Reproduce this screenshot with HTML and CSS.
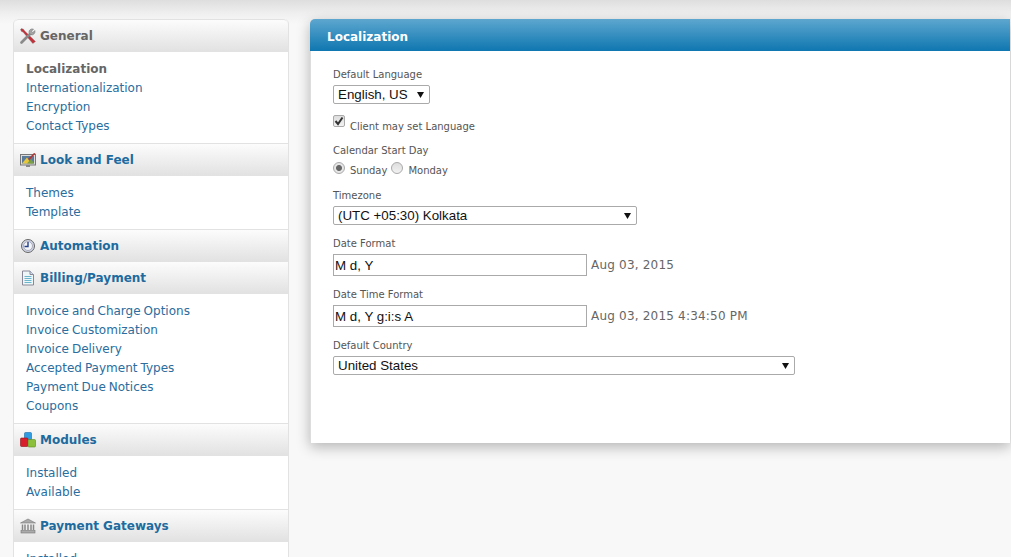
FILE: index.html
```
<!DOCTYPE html>
<html lang="en">
<head>
<meta charset="utf-8">
<title>Localization</title>
<link rel="stylesheet" href="styles.css">
</head>
<body>
<div class="page">
  <nav class="sidebar">
    <h3 class="head head-active">
      <svg class="ico" viewBox="0 0 16 16"><path d="M1.500 .5 .5 1.500 1.500 3.500 3 4 12.800 15.500 15.500 13.500 4.500 2.800 3.500 1.300Z" fill="#c5303a" stroke="#777" stroke-width=".4"/><path d="M1.500 14.500 9.500 6.500" stroke="#8a8a8a" stroke-width="2.600" stroke-linecap="round"/><path d="M9 4.500a3.200 3.200 0 0 1 4.500-3.300L11.500 3.200 12.800 4.500 14.800 2.500A3.200 3.200 0 0 1 10.800 6.700Z" fill="#a5a5a5" stroke="#666" stroke-width=".5"/></svg>
      General</h3>
    <ul class="list">
      <li class="current">Localization</li>
      <li><a href="#">Internationalization</a></li>
      <li><a href="#">Encryption</a></li>
      <li><a href="#">Contact Types</a></li>
    </ul>
    <h3 class="head">
      <svg class="ico" viewBox="0 0 16 16"><rect x="0.500" y="2.500" width="15" height="10.500" fill="#ddd" stroke="#777"/><rect x="2" y="4" width="12" height="7.500" fill="#5a7a9a"/><path d="M2 11.500 7 5.500 11 11.500Z" fill="#e8c83a"/><path d="M7 11.500 11 7 14 11.500Z" fill="#7aa04a"/><rect x="6" y="13" width="4" height="2" fill="#888"/><path d="M8 7 14 1 15.500 1.500 9.500 8Z" fill="#b5332e"/></svg>
      <a href="#">Look and Feel</a></h3>
    <ul class="list">
      <li><a href="#">Themes</a></li>
      <li><a href="#">Template</a></li>
    </ul>
    <h3 class="head head-solo">
      <svg class="ico" viewBox="0 0 16 16"><circle cx="8" cy="8" r="6.500" fill="#cfd6e6" stroke="#666"/><circle cx="8" cy="8" r="4.500" fill="#f2f4f8" stroke="#aab"/><path d="M8 4V8.500H4.500" fill="none" stroke="#24408a" stroke-width="1.400"/></svg>
      <a href="#">Automation</a></h3>
    <h3 class="head">
      <svg class="ico" viewBox="0 0 16 16"><path d="M2.500 1H10L13.500 4.500V15H2.500Z" fill="#eef6f8" stroke="#889"/><path d="M10 1V4.500H13.500" fill="#cde" stroke="#889"/><path d="M4.500 6.500H11.500M4.500 8.500H11.500M4.500 10.500H11.500M4.500 12.500H11.500" stroke="#6bb6cc"/></svg>
      <a href="#">Billing/Payment</a></h3>
    <ul class="list">
      <li><a href="#">Invoice and Charge Options</a></li>
      <li><a href="#">Invoice Customization</a></li>
      <li><a href="#">Invoice Delivery</a></li>
      <li><a href="#">Accepted Payment Types</a></li>
      <li><a href="#">Payment Due Notices</a></li>
      <li><a href="#">Coupons</a></li>
    </ul>
    <h3 class="head">
      <svg class="ico" viewBox="0 0 16 16"><rect x="4.500" y="0.500" width="7" height="7.500" rx="1" fill="#2f9be0" stroke="#1a6aa8" stroke-width=".6"/><rect x="0.500" y="6" width="7.500" height="8.500" rx="1" fill="#d8202c" stroke="#901018" stroke-width=".6"/><rect x="8" y="7.500" width="7.500" height="7.500" rx="1" fill="#8cc03c" stroke="#5a8a20" stroke-width=".6"/></svg>
      <a href="#">Modules</a></h3>
    <ul class="list">
      <li><a href="#">Installed</a></li>
      <li><a href="#">Available</a></li>
    </ul>
    <h3 class="head">
      <svg class="ico" viewBox="0 0 16 16"><path d="M8 1 15.500 5H.5Z" fill="#aaa" stroke="#777" stroke-width=".6"/><path d="M2.500 6.500V12M5 6.500V12M8 6.500V12M11 6.500V12M13.500 6.500V12" stroke="#888" stroke-width="1.500"/><rect x="1" y="12.500" width="14" height="2.500" fill="#aaa" stroke="#777" stroke-width=".6"/></svg>
      <a href="#">Payment Gateways</a></h3>
    <ul class="list">
      <li><a href="#">Installed</a></li>
    </ul>
  </nav>

  <main class="panel">
    <h2 class="panel-title">Localization</h2>
    <form class="form">
      <div class="field">
        <label class="lbl">Default Language</label>
        <select class="sel sel-lang"><option>English, US</option></select>
      </div>
      <div class="field field-check">
        <input class="check" type="checkbox" checked>
        <span class="opt">Client may set Language</span>
      </div>
      <div class="field field-cal">
        <label class="lbl">Calendar Start Day</label>
        <div class="radios">
          <input class="radio" type="radio" name="day" checked><span class="opt">Sunday</span>
          <input class="radio" type="radio" name="day"><span class="opt">Monday</span>
        </div>
      </div>
      <div class="field">
        <label class="lbl">Timezone</label>
        <select class="sel sel-tz"><option>(UTC +05:30) Kolkata</option></select>
      </div>
      <div class="field">
        <label class="lbl">Date Format</label>
        <div class="inline">
          <input class="txt" type="text" value="M d, Y">
          <span class="sample">Aug 03, 2015</span>
        </div>
      </div>
      <div class="field">
        <label class="lbl">Date Time Format</label>
        <div class="inline">
          <input class="txt" type="text" value="M d, Y g:i:s A">
          <span class="sample">Aug 03, 2015 4:34:50 PM</span>
        </div>
      </div>
      <div class="field">
        <label class="lbl">Default Country</label>
        <select class="sel sel-country"><option>United States</option></select>
      </div>
    </form>
  </main>
</div>
</body>
</html>
```
FILE: styles.css
```
* { box-sizing: border-box; }
html, body { margin: 0; height: 557px; overflow: hidden; }
body {
  background: linear-gradient(#dedede 0, #f0f0f0 14px, #f8f8f8 24px) no-repeat #f8f8f8;
  font-family: "DejaVu Sans", Verdana, sans-serif;
  color: #555;
}
.page { display: flex; align-items: flex-start; gap: 21px; padding: 19px 0 0 13px; width: 1040px; }

.sidebar {
  width: 276px;
  flex: none;
  background: #fff;
  border: 1px solid #e2e2e2;
  border-top: 0;
  border-radius: 5px 5px 0 0;
}
.head {
  display: flex;
  align-items: center;
  gap: 4px;
  height: 33px;
  margin: 0;
  padding-left: 6px;
  font-size: 12px;
  font-weight: bold;
  color: #666;
  background: linear-gradient(#fcfcfc, #e2e2e2);
  border-top: 1px solid #e2e2e2;
  border-bottom: 1px solid #e2e2e2;
}
.head:first-child { border-radius: 5px 5px 0 0; }
.head a { color: #1d6b9f; }
.head-solo { margin-bottom: -1px; position: relative; }
.ico { width: 16px; height: 16px; flex: none; }
a { text-decoration: none; }
.list { list-style: none; margin: 0; padding: 8px 0 7px 12px; font-size: 12px; line-height: 19px; word-spacing: -.8px; }
.list a { color: #2a6d9e; }
.current { font-weight: bold; color: #666; }

.panel {
  flex: none;
  width: 700px;
  height: 424px;
  background: #fff;
  border-left: 1px solid #ddd;
  border-radius: 5px 0 0 0;
  box-shadow: 0 4px 14px rgba(0, 0, 0, .28);
}
.panel-title {
  margin: 0 0 0 -1px;
  height: 32px;
  padding-left: 17px;
  font-size: 12px;
  line-height: 36px;
  color: #fff;
  background: linear-gradient(#5da7cf, #0f77b0);
  border-radius: 5px 0 0 0;
}
.form { display: flex; flex-direction: column; padding: 18px 0 0 22px; }
.field { display: flex; flex-direction: column; align-items: flex-start; margin-bottom: 13px; }
.lbl { font-size: 10px; line-height: 12px; margin-bottom: 4px; color: #555; }
.opt { font-size: 10px; line-height: 12px; color: #555; }
.sel {
  appearance: none;
  height: 19px;
  padding: 0 0 1px 4px;
  font: 13.333px "Liberation Sans", Arial, sans-serif;
  color: #111;
  background: #fff url("data:image/svg+xml,%3Csvg xmlns='http://www.w3.org/2000/svg' width='7' height='6'%3E%3Cpath d='M0 0H7L3.500 6Z' fill='%23111'/%3E%3C/svg%3E") no-repeat right 5px center;
  border: 1px solid #aaa;
  border-radius: 2px;
}
.sel-lang { width: 97px; }
.sel-tz { width: 304px; }
.sel-country { width: 462px; }
.field-check { flex-direction: row; align-items: flex-start; gap: 5px; margin-top: -2px; margin-bottom: 12px; }
.field-check .opt { margin-top: 6px; }
.field-cal { margin-bottom: 13px; }
.radios { display: flex; align-items: flex-start; margin-top: 1px; }
.radios .opt { margin: 3px 4px 0 0; }
.check, .radio {
  appearance: none;
  width: 12px;
  height: 12px;
  margin: 0;
  border: 1px solid #aaa;
  background: linear-gradient(#ddd, #f2f2f2);
}
.check { border-radius: 2px; }
.check:checked {
  background: url("data:image/svg+xml,%3Csvg xmlns='http://www.w3.org/2000/svg' width='10' height='10'%3E%3Cpath d='M1.500 5 4 8 8.500 1.500' fill='none' stroke='%23333' stroke-width='2'/%3E%3C/svg%3E") center no-repeat, linear-gradient(#ddd, #f2f2f2);
}
.radio { border-radius: 50%; margin-right: 5px; }
.radio:checked {
  background: radial-gradient(circle, #666 0, #666 2.500px, #e6e6e6 3.500px);
}
.inline { display: flex; align-items: center; gap: 4px; }
.txt {
  width: 254px;
  height: 22px;
  padding: 0 1px;
  font: 13.333px "Liberation Sans", Arial, sans-serif;
  color: #111;
  border: 1px solid #aaa;
}
.sample { font-size: 12px; color: #666; letter-spacing: .2px; }
```
